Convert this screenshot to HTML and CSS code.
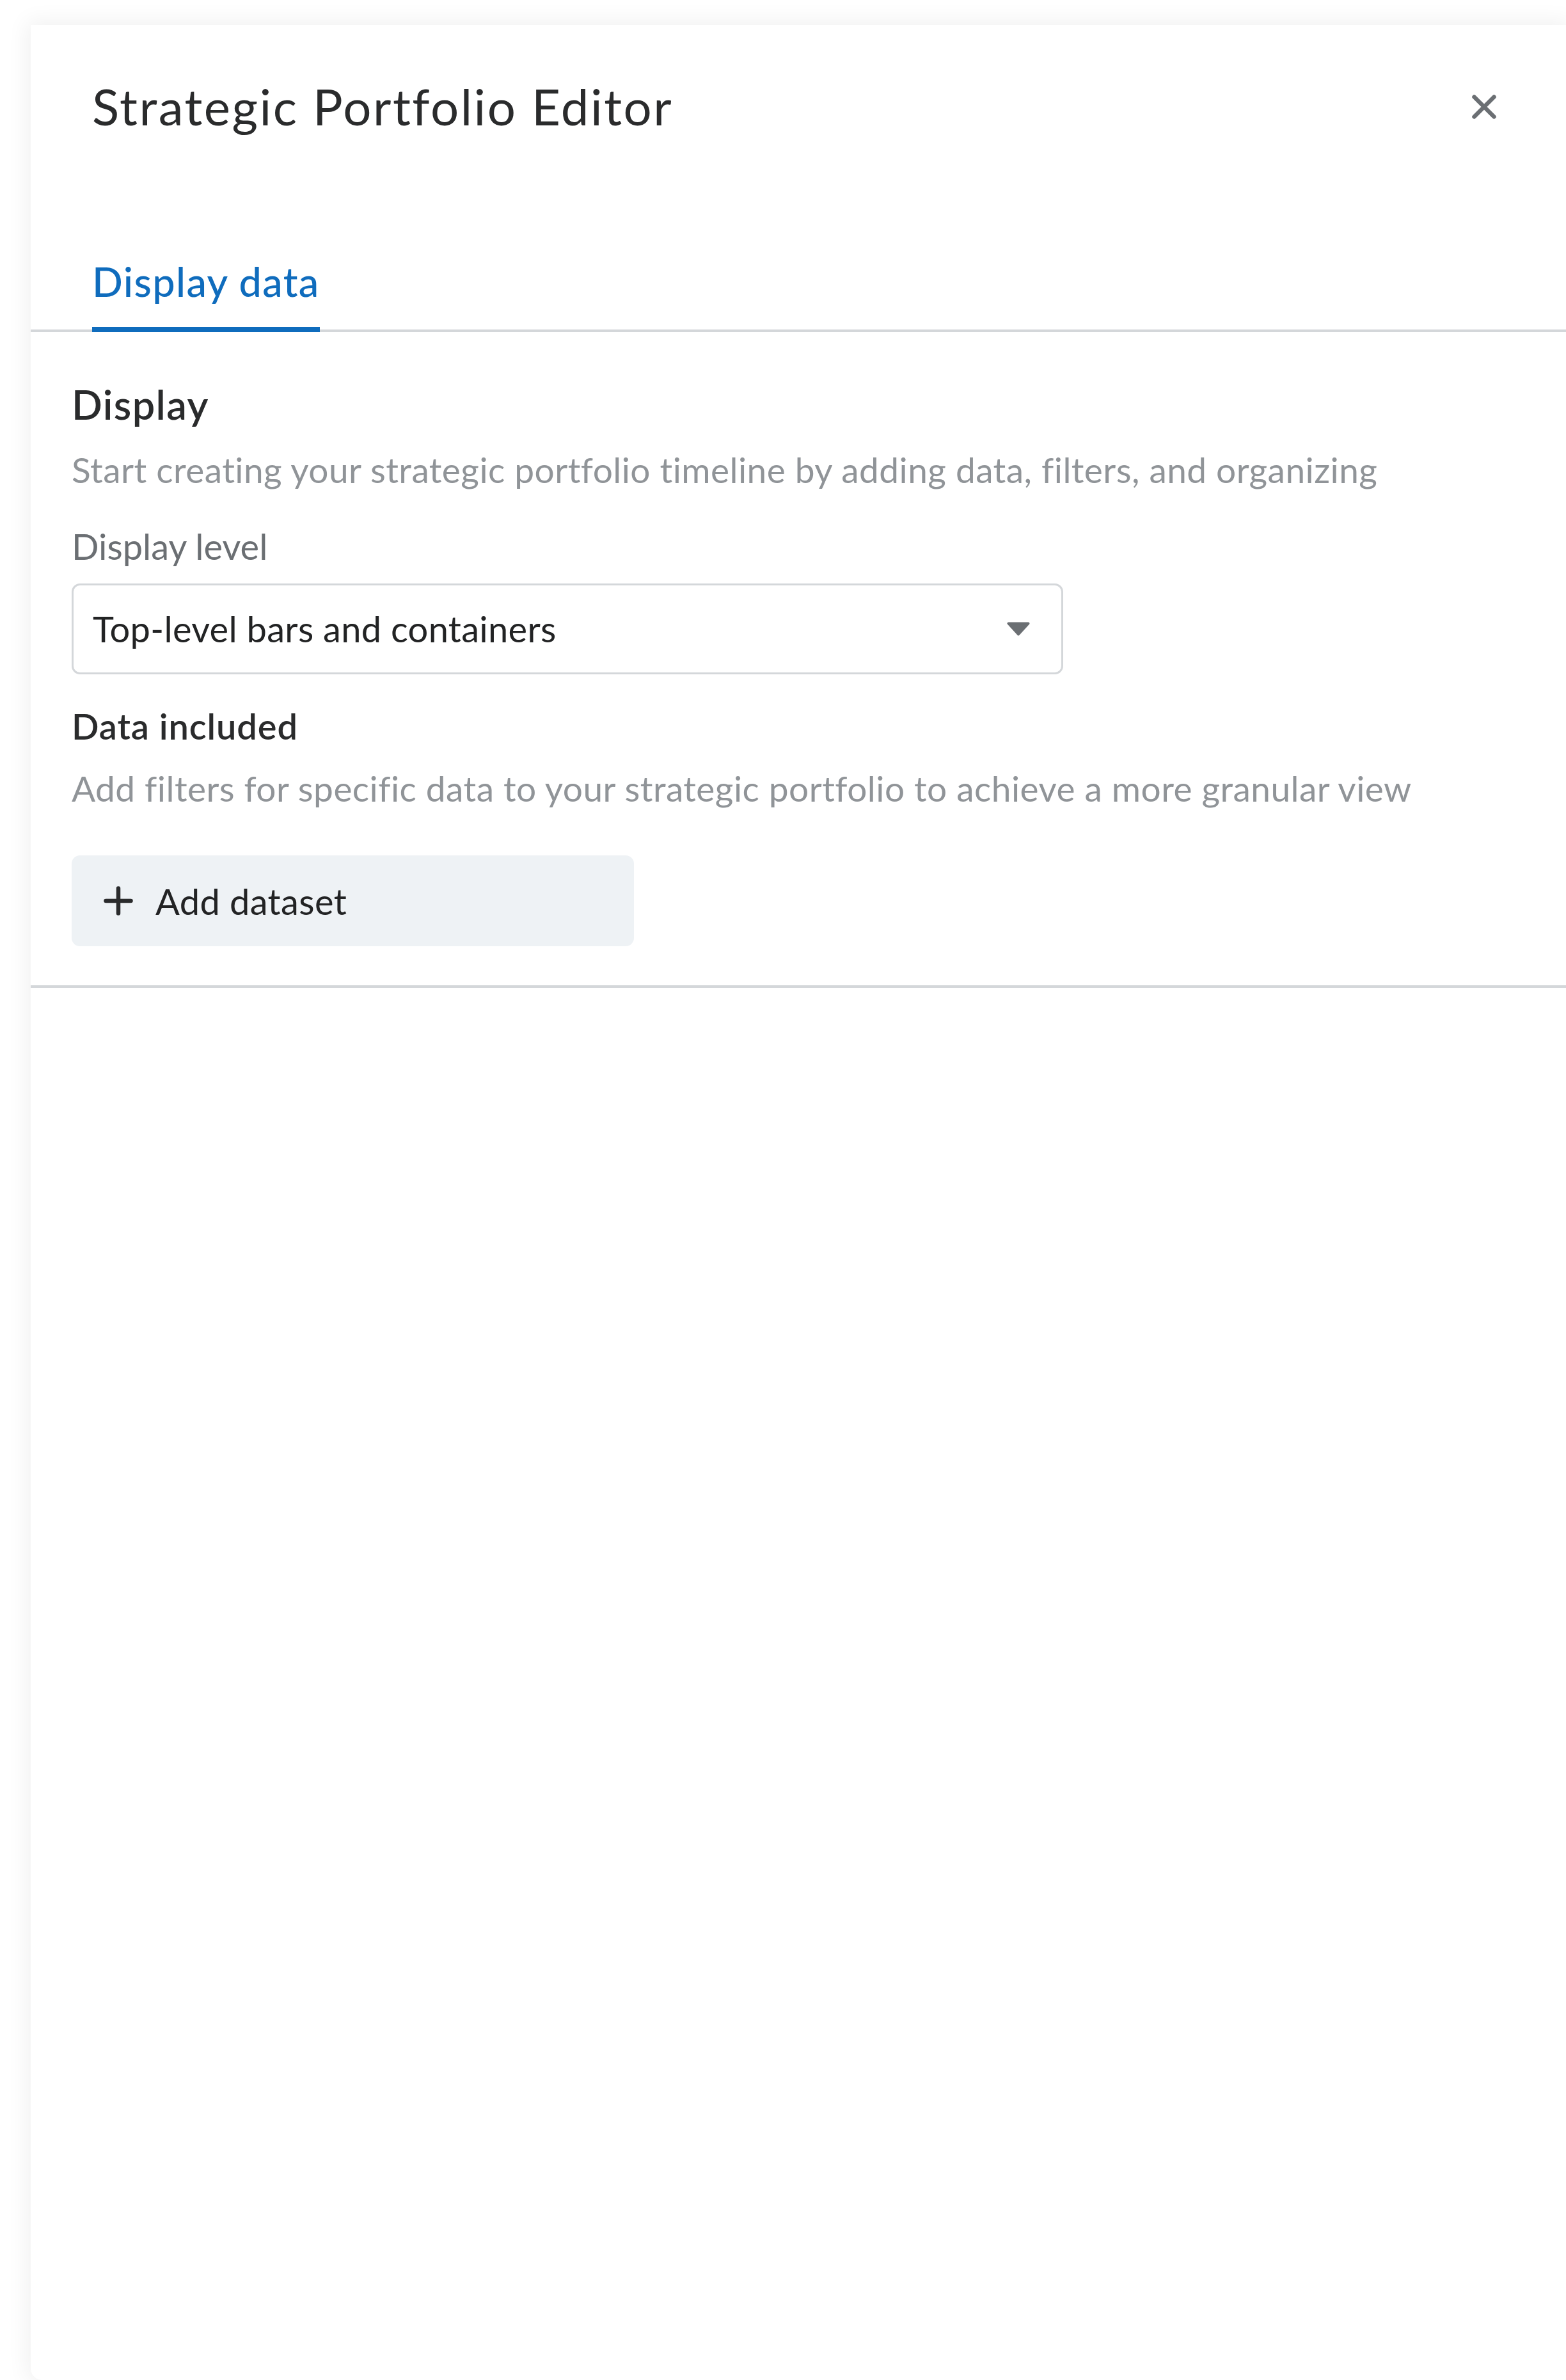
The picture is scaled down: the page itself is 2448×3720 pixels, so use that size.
FILE: index.html
```html
<!DOCTYPE html>
<html lang="en">
<head>
<meta charset="utf-8">
<title>Strategic Portfolio Editor</title>
<link rel="stylesheet" href="styles.css">
</head>
<body>
<div class="panel">
  <header class="panel-header">
    <h1 class="panel-title">Strategic Portfolio Editor</h1>
    <button class="close-btn" aria-label="Close">
      <svg width="40" height="40" viewBox="0 0 40 40"><path d="M4.5 4.5 L35.5 35.5 M35.5 4.5 L4.5 35.5" stroke="#6b6f73" stroke-width="6.5" stroke-linecap="round" fill="none"/></svg>
    </button>
  </header>
  <nav class="tabs">
    <div class="tab tab--active">Display data</div>
  </nav>
  <section class="section">
    <h2 class="section-title">Display</h2>
    <p class="section-desc">Start creating your strategic portfolio timeline by adding data, filters, and organizing</p>
    <label class="field-label">Display level</label>
    <div class="select">
      <span class="select-value">Top-level bars and containers</span>
      <svg class="select-caret" width="36" height="22" viewBox="0 0 36 22"><polygon points="2.5,2.5 33.5,2.5 18,19.5" fill="#6b6f73" stroke="#6b6f73" stroke-width="4" stroke-linejoin="round"/></svg>
    </div>
    <h3 class="subsection-title">Data included</h3>
    <p class="section-desc">Add filters for specific data to your strategic portfolio to achieve a more granular view</p>
    <button class="add-btn">
      <svg width="46" height="46" viewBox="0 0 46 46"><path d="M23 3.5 V42.5 M3.5 23 H42.5" stroke="#2a2b2c" stroke-width="6.5" stroke-linecap="round" fill="none"/></svg>
      <span>Add dataset</span>
    </button>
  </section>
</div>
</body>
</html>
```
FILE: styles.css
```css
html, body {
  margin: 0;
  height: 100%;
  overflow: hidden;
  background: #ffffff;
}
body {
  font-family: "Lato", "Liberation Sans", sans-serif;
  font-variant-ligatures: none;
  color: #2a2b2c;
}
.panel {
  margin: 39px 0 0 48px;
  width: 2400px;
  height: 3681px;
  background: #ffffff;
  box-shadow: 0 0 34px 6px rgba(0, 0, 0, 0.06);
  border-bottom-left-radius: 18px;
  display: flex;
  flex-direction: column;
}
.panel-header {
  display: flex;
  align-items: center;
  justify-content: space-between;
  padding: 81px 108px 0 96px;
}
.panel-title {
  margin: 0;
  font-size: 78px;
  font-weight: 400;
  line-height: 1.2;
  letter-spacing: 2.5px;
  color: #2a2b2c;
}
.close-btn {
  border: 0;
  background: none;
  padding: 0;
  width: 40px;
  height: 40px;
  display: flex;
  cursor: pointer;
}
.tabs {
  display: flex;
  padding: 188px 0 0 96px;
  box-shadow: inset 0 -4px 0 #d4d7da;
}
.tab {
  font-size: 63px;
  font-weight: 500;
  line-height: 1.2;
  letter-spacing: 1.4px;
  color: #0f6cbd;
  padding-bottom: 34px;
  border-bottom: 8px solid #0f6cbd;
}
.section {
  padding: 75px 64px 61px;
  border-bottom: 4px solid #d4d7da;
}
.section-title {
  margin: 0;
  font-size: 63px;
  font-weight: 600;
  line-height: 1.2;
  letter-spacing: 1.4px;
  color: #2a2b2c;
}
.section-desc {
  margin: 31px 0 0;
  font-size: 55px;
  line-height: 1.2;
  letter-spacing: 0.45px;
  color: #909498;
}
.field-label {
  display: block;
  margin-top: 53px;
  font-size: 56px;
  line-height: 1.2;
  color: #6b6f73;
}
.select {
  margin-top: 25px;
  width: 1550px;
  height: 142px;
  box-sizing: border-box;
  border: 3px solid #d4d7da;
  border-radius: 13px;
  display: flex;
  align-items: center;
  justify-content: space-between;
  padding: 0 49px 0 30px;
}
.select-value {
  font-size: 56px;
  line-height: 1.2;
  letter-spacing: 0.3px;
  color: #222324;
}
.subsection-title {
  margin: 47px 0 0;
  font-size: 56px;
  font-weight: 600;
  line-height: 1.2;
  letter-spacing: 0.9px;
  color: #2a2b2c;
}
.add-btn {
  margin-top: 72px;
  width: 879px;
  height: 142px;
  box-sizing: border-box;
  border: 0;
  border-radius: 13px;
  background: #eef2f5;
  display: flex;
  align-items: center;
  gap: 35px;
  padding: 0 0 0 50px;
  font-family: inherit;
  font-size: 56px;
  line-height: 1.2;
  letter-spacing: 0.4px;
  color: #222324;
  cursor: pointer;
}
```
